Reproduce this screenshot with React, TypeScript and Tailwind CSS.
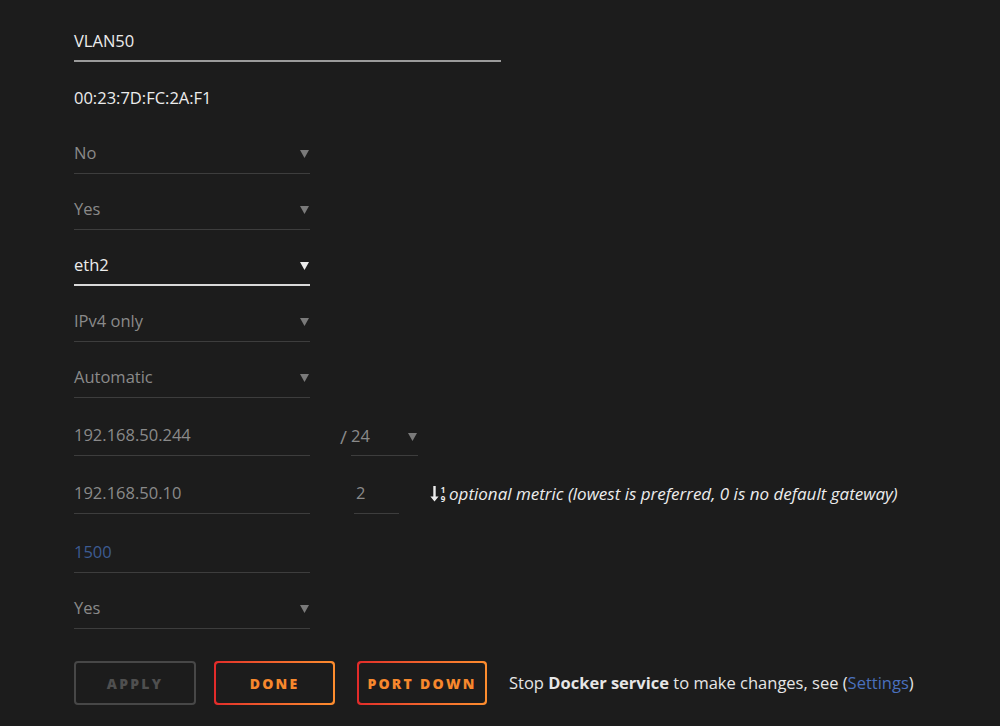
import React from "react";

const font = { fontFamily: '"Open Sans", "Noto Sans", sans-serif' };

const Caret = ({ light }: { light?: boolean }) => (
  <svg width="9" height="9" viewBox="0 0 9 9" className="mr-[1px]">
    <path d="M0 1 H9 L4.5 9 Z" fill={light ? "#ececec" : "#7a7a7a"} />
  </svg>
);

const Select = ({ value, active }: { value: string; active?: boolean }) => (
  <div
    className={`w-[236px] h-[40px] flex items-center justify-between ${
      active ? "border-b-2 border-[#d9d9d9] text-[#ececec]" : "border-b border-[#3d3d3d] text-[#8a8a8a]"
    }`}
  >
    <span>{value}</span>
    <Caret light={active} />
  </div>
);

const Input = ({ value, className = "" }: { value: string; className?: string }) => (
  <div className={`w-[236px] h-[40px] flex items-center border-b border-[#3d3d3d] text-[#8a8a8a] ${className}`}>
    {value}
  </div>
);

const GradientButton = ({ label, w }: { label: string; w: string }) => (
  <div className={`${w} h-[44px] rounded-[4px] p-[2px] bg-gradient-to-r from-[#e22a2a] to-[#fd8d2e]`}>
    <div className="w-full h-full rounded-[3px] bg-[#1c1c1c] flex items-center justify-center text-[14px] font-extrabold tracking-[0.16em] text-[#f7882d]">
      {label}
    </div>
  </div>
);

export default function App() {
  return (
    <div className="w-[1000px] h-[726px] bg-[#1c1c1c] text-[16.5px] overflow-hidden" style={font}>
      <div className="pl-[74px] pt-[6px]">
        {/* description */}
        <div className="h-[56px] flex items-end">
          <div className="w-[427px] h-[40px] flex items-center border-b-2 border-[#9b9b9b] text-[#ececec]">VLAN50</div>
        </div>
        {/* mac */}
        <div className="h-[56px] flex items-end">
          <div className="h-[40px] flex items-center text-[#ececec]">00:23:7D:FC:2A:F1</div>
        </div>
        <div className="h-[56px] flex items-end">
          <Select value="No" />
        </div>
        <div className="h-[56px] flex items-end">
          <Select value="Yes" />
        </div>
        <div className="h-[56px] flex items-end">
          <Select value="eth2" active />
        </div>
        <div className="h-[56px] flex items-end">
          <Select value="IPv4 only" />
        </div>
        <div className="h-[56px] flex items-end">
          <Select value="Automatic" />
        </div>
        {/* ip address */}
        <div className="h-[58px] flex items-end">
          <Input value="192.168.50.244" />
          <div className="flex items-end ml-[30px]">
            <span className="h-[38px] flex items-center text-[#8a8a8a] text-[19px] mr-[4px]">/</span>
            <div className="w-[67px] h-[38px] flex items-center justify-between border-b border-[#3d3d3d] text-[#8a8a8a]">
              <span>24</span>
              <Caret />
            </div>
          </div>
        </div>
        {/* gateway */}
        <div className="h-[58px] flex items-end">
          <Input value="192.168.50.10" />
          <div className="ml-[44px] w-[45px] h-[40px] flex items-center border-b border-[#3d3d3d] text-[#8a8a8a] pl-[2px]">2</div>
          <div className="h-[40px] ml-[31px] flex items-center text-[#ececec]">
            <svg width="9" height="16" viewBox="0 0 9 16" className="mr-[1px]">
              <path d="M3.3 0 H5.7 V10.5 H8.6 L4.5 15.5 L0.4 10.5 H3.3 Z" fill="#ececec" />
            </svg>
            <span className="flex flex-col items-center w-[6px] leading-[8px] text-[8px] font-bold mr-[3px] mt-[1px] gap-[1px]">
              <span className="h-[8px]">1</span>
              <span className="h-[8px]">9</span>
            </span>
            <span className="italic text-[17px]">optional metric (lowest is preferred, 0 is no default gateway)</span>
          </div>
        </div>
        {/* mtu */}
        <div className="h-[59px] flex items-end">
          <Input value="1500" className="!text-[#3d5b91]" />
        </div>
        <div className="h-[56px] flex items-end">
          <Select value="Yes" />
        </div>
        {/* buttons */}
        <div className="mt-[32px] flex items-center">
          <div className="w-[122px] h-[44px] rounded-[4px] border-2 border-[#474747] flex items-center justify-center text-[14px] font-extrabold tracking-[0.16em] text-[#4f4f4f]">
            APPLY
          </div>
          <div className="ml-[18px]">
            <GradientButton label="DONE" w="w-[121px]" />
          </div>
          <div className="ml-[22px]">
            <GradientButton label="PORT DOWN" w="w-[130px]" />
          </div>
          <div className="ml-[22px] text-[#e6e6e6]">
            Stop <span className="font-bold">Docker service</span> to make changes, see (
            <span className="text-[#4a70bd]">Settings</span>)
          </div>
        </div>
      </div>
    </div>
  );
}
